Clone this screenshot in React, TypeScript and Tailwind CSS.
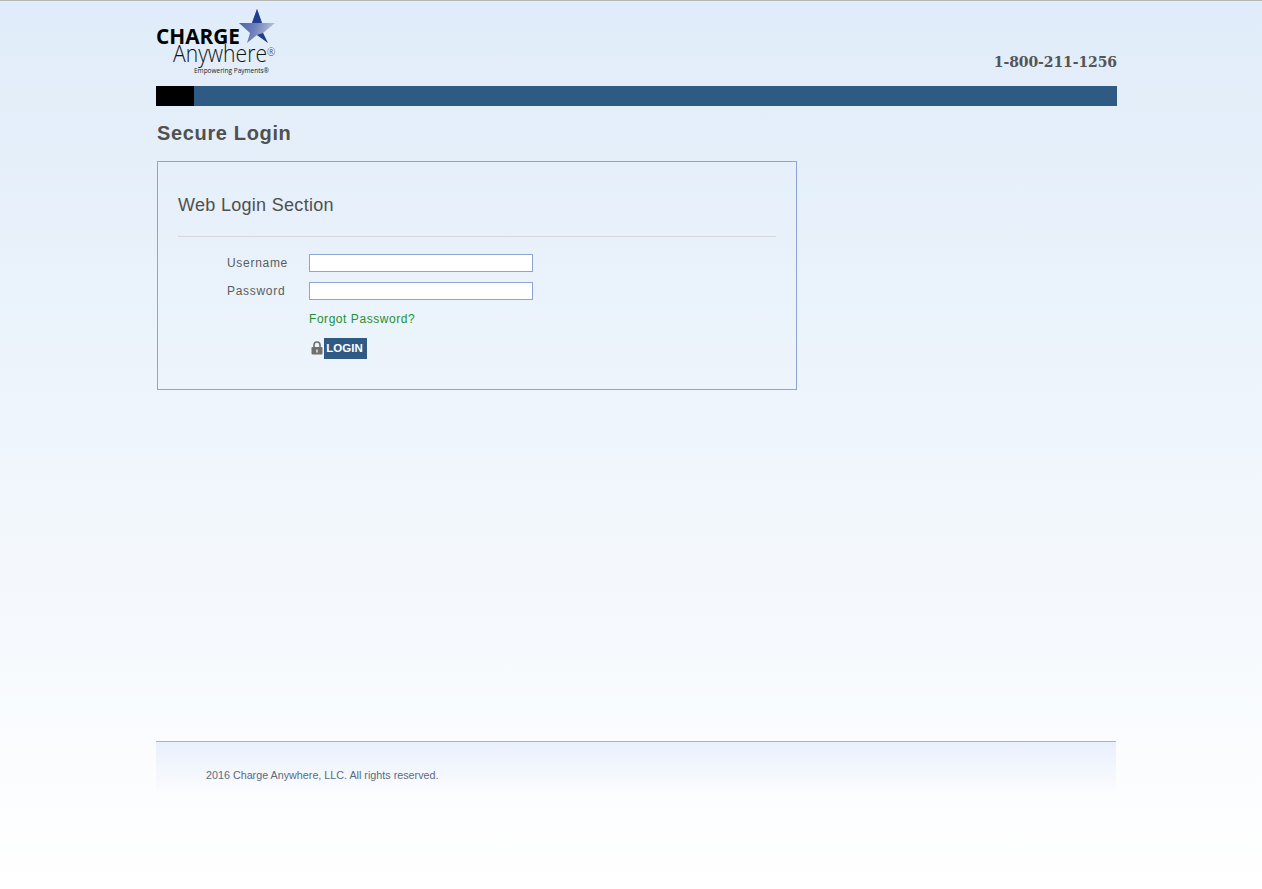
import React from "react";

function Logo() {
  return (
    <svg width="122" height="68" viewBox="0 0 122 68" className="block">
      <defs>
        <linearGradient id="star" x1="0" y1="0" x2="1" y2="0.3">
          <stop offset="0" stopColor="#3f5aa6" />
          <stop offset="0.55" stopColor="#6f80ba" />
          <stop offset="1" stopColor="#b4bbd8" />
        </linearGradient>
      </defs>
      <polygon
        points="101,0 106,14 119,14 107,24 112,34 101,26 91,34 94,24 83,14 96,14"
        fill="url(#star)"
      />
      <polygon points="101,0 106,14 96,14" fill="#1d3f8c" />
      <polygon points="107,24 112,34 101,26" fill="#1d3f8c" />
      <text x="0" y="35" textLength="84" lengthAdjust="spacingAndGlyphs" className="fill-black font-['Open_Sans'] font-bold text-[22px]">
        CHARGE
      </text>
      <text x="17" y="53" textLength="94" lengthAdjust="spacingAndGlyphs" className="fill-[#111] font-['Open_Sans'] font-[350] text-[23px]">
        Anywhere
      </text>
      <text x="111" y="47" className="fill-[#333] font-['Open_Sans'] font-light text-[10px]">
        ®
      </text>
      <text x="38" y="64" textLength="75" lengthAdjust="spacingAndGlyphs" className="fill-[#222] font-['Open_Sans'] text-[7px]">
        Empowering Payments®
      </text>
    </svg>
  );
}

function LockIcon() {
  return (
    <svg width="12" height="14" viewBox="0 0 12 14" className="mb-[2px] block">
      <path d="M3 6V4a3 3 0 0 1 6 0v2" fill="none" stroke="#6f6f6f" strokeWidth="1.6" />
      <rect x="0.5" y="6" width="11" height="7.5" rx="1" fill="#6f6f6f" />
      <rect x="5" y="8.5" width="2" height="3" fill="#c9c9c9" />
    </svg>
  );
}

export default function App() {
  return (
    <div className="min-h-[889px] border-t border-[#b5b5b5] bg-gradient-to-b from-[#e0ecf9] to-white pl-[156px] font-['Liberation_Sans',sans-serif]">
      <div className="w-[961px]">
        {/* header */}
        <div className="flex h-[85px] items-start justify-between">
          <div className="pt-[8px]">
            <Logo />
          </div>
          <div className="pt-[51px] font-['DejaVu_Serif',serif] text-[14px] leading-[20px] font-bold tracking-[-0.1px] text-[#555]">1-800-211-1256</div>
        </div>
        <div className="flex h-[20px] bg-[#2f5a84]">
          <div className="w-[38px] bg-black" />
        </div>

        <h1 className="mt-[14px] pl-px text-[20px] leading-[26px] font-bold tracking-[0.65px] text-[#505050]">Secure Login</h1>

        {/* login panel */}
        <div className="mt-[15px] ml-px h-[229px] w-[640px] border border-[#8ea4d2] px-[20px]">
          <h2 className="pt-[33px] text-[18px] leading-[20px] tracking-[0.3px] text-[#4f4f4f]">Web Login Section</h2>
          <div className="mt-[21px] border-t border-[#d5d9df]" />
          <div className="mt-[17px] flex items-center">
            <label className="w-[131px] pl-[49px] text-[12px] tracking-[0.7px] text-[#5c5c5c]">Username</label>
            <input type="text" className="h-[18px] w-[224px] border border-[#8ea4d2] bg-white" />
          </div>
          <div className="mt-[10px] flex items-center">
            <label className="w-[131px] pl-[49px] text-[12px] tracking-[0.7px] text-[#5c5c5c]">Password</label>
            <input type="password" className="h-[18px] w-[224px] border border-[#8ea4d2] bg-white" />
          </div>
          <a className="mt-[12px] ml-[131px] block text-[12px] leading-[15px] tracking-[0.55px] text-[#259035]">Forgot Password?</a>
          <div className="mt-[11px] ml-[133px] flex items-center gap-[1px]">
            <LockIcon />
            <button className="h-[21px] w-[43px] bg-[#2f5a84] pr-[2px] text-[11.5px] font-bold text-white">LOGIN</button>
          </div>
        </div>

        {/* footer */}
        <div className="mt-[351px] h-[54px] w-[960px] border-t border-[#a9b3cc] bg-gradient-to-b from-[#eaf0fc] to-transparent pt-[27px] pl-[50px] text-[10.75px] leading-[13px] text-[#5a6b80]">
          2016 Charge Anywhere, LLC. All rights reserved.
        </div>
      </div>
    </div>
  );
}
